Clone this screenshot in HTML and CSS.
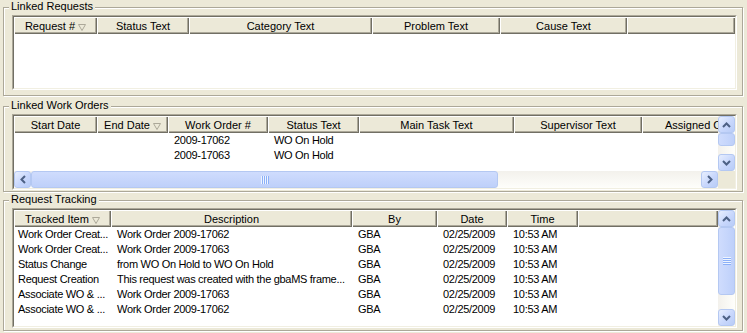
FILE: index.html
```html
<!DOCTYPE html>
<html lang="en">
<head>
    <meta charset="UTF-8">
    <title>Request Links</title>
    <link rel="stylesheet" href="styles.css">
</head>
<body>
    <section class="group g1">
        <span class="legend">Linked Requests</span>
        <div class="list lv1">
            <div class="frame">
                <div class="pane">
                    <div class="cols head">
                        <div class="hc">Request #<svg class="sort" width="8" height="7" viewBox="0 0 8 7"><path d="M0.5 0.5 H7.5 L4 6.5 Z" fill="none" stroke="#aca899"/></svg></div>
                        <div class="hc">Status Text</div>
                        <div class="hc">Category Text</div>
                        <div class="hc">Problem Text</div>
                        <div class="hc">Cause Text</div>
                        <div class="hc"></div>
                    </div>
                </div>
            </div>
        </div>
    </section>

    <section class="group g2">
        <span class="legend">Linked Work Orders</span>
        <div class="list lv2">
            <div class="frame">
                <div class="pane">
                    <div class="cols head">
                        <div class="hc">Start Date</div>
                        <div class="hc">End Date<svg class="sort" width="8" height="7" viewBox="0 0 8 7"><path d="M0.5 0.5 H7.5 L4 6.5 Z" fill="none" stroke="#aca899"/></svg></div>
                        <div class="hc">Work Order #</div>
                        <div class="hc">Status Text</div>
                        <div class="hc">Main Task Text</div>
                        <div class="hc">Supervisor Text</div>
                        <div class="hc hc-left">Assigned Crew</div>
                    </div>
                    <div class="cols row">
                        <span></span><span></span><span>2009-17062</span><span>WO On Hold</span><span></span><span></span><span></span>
                    </div>
                    <div class="cols row">
                        <span></span><span></span><span>2009-17063</span><span>WO On Hold</span><span></span><span></span><span></span>
                    </div>
                </div>
                <div class="vscroll">
                    <div class="sbtn"><svg width="9" height="6" viewBox="0 0 9 6"><path d="M1 5 L4.5 1.5 L8 5" fill="none" stroke="#4d6185" stroke-width="2"/></svg></div>
                    <div class="thumb" style="height: 13px"></div>
                    <div class="track"></div>
                    <div class="sbtn"><svg width="9" height="6" viewBox="0 0 9 6"><path d="M1 1 L4.5 4.5 L8 1" fill="none" stroke="#4d6185" stroke-width="2"/></svg></div>
                </div>
                <div class="hscroll">
                    <div class="sbtn"><svg width="6" height="9" viewBox="0 0 6 9"><path d="M5 1 L1.5 4.5 L5 8" fill="none" stroke="#4d6185" stroke-width="2"/></svg></div>
                    <div class="thumb" style="width: 467px"><div class="grip grip-v"></div></div>
                    <div class="track"></div>
                    <div class="sbtn"><svg width="6" height="9" viewBox="0 0 6 9"><path d="M1 1 L4.5 4.5 L1 8" fill="none" stroke="#4d6185" stroke-width="2"/></svg></div>
                </div>
                <div class="corner"></div>
            </div>
        </div>
    </section>

    <section class="group g3">
        <span class="legend">Request Tracking</span>
        <div class="list lv3">
            <div class="frame">
                <div class="pane">
                    <div class="cols head">
                        <div class="hc">Tracked Item<svg class="sort" width="8" height="7" viewBox="0 0 8 7"><path d="M0.5 0.5 H7.5 L4 6.5 Z" fill="none" stroke="#aca899"/></svg></div>
                        <div class="hc">Description</div>
                        <div class="hc">By</div>
                        <div class="hc">Date</div>
                        <div class="hc">Time</div>
                        <div class="hc"></div>
                    </div>
                    <div class="cols row">
                        <span>Work Order Creat...</span><span>Work Order 2009-17062</span><span>GBA</span><span>02/25/2009</span><span>10:53 AM</span><span></span>
                    </div>
                    <div class="cols row">
                        <span>Work Order Creat...</span><span>Work Order 2009-17063</span><span>GBA</span><span>02/25/2009</span><span>10:53 AM</span><span></span>
                    </div>
                    <div class="cols row">
                        <span>Status Change</span><span>from WO On Hold to WO On Hold</span><span>GBA</span><span>02/25/2009</span><span>10:53 AM</span><span></span>
                    </div>
                    <div class="cols row">
                        <span>Request Creation</span><span>This request was created with the gbaMS frame...</span><span>GBA</span><span>02/25/2009</span><span>10:53 AM</span><span></span>
                    </div>
                    <div class="cols row">
                        <span>Associate WO &amp; ...</span><span>Work Order 2009-17063</span><span>GBA</span><span>02/25/2009</span><span>10:53 AM</span><span></span>
                    </div>
                    <div class="cols row">
                        <span>Associate WO &amp; ...</span><span>Work Order 2009-17062</span><span>GBA</span><span>02/25/2009</span><span>10:53 AM</span><span></span>
                    </div>
                </div>
                <div class="vscroll">
                    <div class="sbtn"><svg width="9" height="6" viewBox="0 0 9 6"><path d="M1 5 L4.5 1.5 L8 5" fill="none" stroke="#4d6185" stroke-width="2"/></svg></div>
                    <div class="thumb" style="height: 68px"><div class="grip grip-h"></div></div>
                    <div class="track"></div>
                    <div class="sbtn"><svg width="9" height="6" viewBox="0 0 9 6"><path d="M1 1 L4.5 4.5 L8 1" fill="none" stroke="#4d6185" stroke-width="2"/></svg></div>
                </div>
            </div>
        </div>
    </section>
</body>
</html>
```

FILE: styles.css
```css
* {
    box-sizing: border-box;
}

body {
    margin: 0;
    padding: 7px 4px 0 3px;
    width: 747px;
    height: 333px;
    overflow: hidden;
    background: #ece9d8;
    color: #000;
    font-family: "Liberation Sans", Arial, sans-serif;
    font-size: 11px;
}

/* etched group boxes */
.group {
    position: relative;
    border: 1px solid #aca899;
    box-shadow: inset 1px 1px #fff, 1px 1px #fff;
    padding: 7px 5px 5px 8px;
}

.g2 {
    margin-top: 10px;
    padding-bottom: 1px;
}

.g3 {
    margin-top: 8px;
    padding-bottom: 2px;
}

.legend {
    position: absolute;
    left: 5px;
    top: -8px;
    padding: 0 2px;
    line-height: 13px;
    background: #ece9d8;
}

/* list views */
.list {
    border: 1px solid;
    border-color: #aca899 #fff #fff #aca899;
}

.lv1 { height: 75px; }
.lv2 { height: 76px; }
.lv3 { height: 120px; }

.frame {
    height: 100%;
    border: 1px solid;
    border-color: #716f64 #f1efe2 #f1efe2 #716f64;
    background: #fff;
    display: grid;
    grid-template-columns: minmax(0, 1fr) 17px;
}

.lv1 .frame {
    grid-template-columns: minmax(0, 1fr);
}

.lv2 .frame {
    grid-template-rows: minmax(0, 1fr) 17px;
}

.pane {
    overflow: hidden;
}

.cols {
    display: grid;
}

.lv1 .cols { grid-template-columns: 83px 92px 183px 128px 127px 1fr; }
.lv2 .cols { grid-template-columns: 83px 71px 100px 91px 155px 128px 120px; }
.lv3 .cols { grid-template-columns: 97px 241px 85px 70px 71px 1fr; }

.hc {
    height: 17px;
    padding-top: 1px;
    line-height: 16px;
    text-align: center;
    white-space: nowrap;
    overflow: hidden;
    background: #ece9d8;
    box-shadow: inset 1px 1px #fff, inset -1px -1px #716f64, inset -2px -2px #aca899;
}

.hc-left {
    text-align: left;
    padding-left: 23px;
}

.sort {
    display: inline-block;
    margin-left: 3px;
    vertical-align: -1px;
}

.row {
    height: 15px;
    line-height: 15px;
    white-space: nowrap;
    letter-spacing: -0.3px;
}

.row span {
    padding-left: 6px;
    overflow: hidden;
}

.row span:first-child {
    padding-left: 4px;
}

/* luna scroll bars */
.vscroll {
    display: flex;
    flex-direction: column;
    background: linear-gradient(to right, #f3f1ec, #fefefb);
}

.hscroll {
    display: flex;
    background: linear-gradient(#f3f1ec, #fefefb);
}

.sbtn {
    flex: none;
    width: 17px;
    height: 17px;
    border: 1px solid #b4c8f2;
    border-radius: 3px;
    background: linear-gradient(135deg, #e8effe, #c8d7fc 55%, #b8ccf7);
    display: flex;
    align-items: center;
    justify-content: center;
}

.thumb {
    flex: none;
    border: 1px solid #b4c8f2;
    border-radius: 3px;
    display: flex;
    align-items: center;
    justify-content: center;
}

.vscroll .thumb {
    width: 17px;
    background: linear-gradient(to right, #cfdcfd, #bed0fa);
}

.hscroll .thumb {
    height: 17px;
    background: linear-gradient(#cfdcfd, #bed0fa);
}

.track {
    flex: 1;
}

.grip-h {
    width: 8px;
    height: 8px;
    background: repeating-linear-gradient(#eef4fe 0 1px, #8cb0f8 1px 2px);
}

.grip-v {
    width: 8px;
    height: 8px;
    background: repeating-linear-gradient(to right, #eef4fe 0 1px, #8cb0f8 1px 2px);
}

.corner {
    background: #ece9d8;
}
```
